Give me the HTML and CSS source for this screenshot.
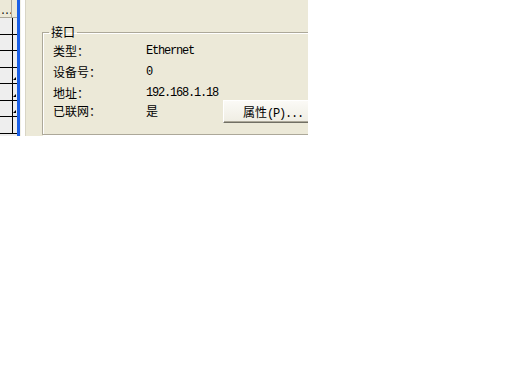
FILE: index.html
```html
<!DOCTYPE html>
<html lang="zh-CN">
<head>
  <meta charset="UTF-8">
  <title>接口属性</title>
  <link rel="stylesheet" href="styles.css">
</head>
<body>
  <div class="window">
    <div class="grid">
      <div class="grid-head">
        <div class="head-btn">...</div>
      </div>
      <div class="grid-row"><div class="cell"></div><div class="cell-s"></div></div>
      <div class="grid-row"><div class="cell"></div><div class="cell-s"></div></div>
      <div class="grid-row"><div class="cell"></div><div class="cell-s"></div></div>
      <div class="grid-row"><div class="cell"></div><div class="cell-s"><span class="mark"></span></div></div>
      <div class="grid-row"><div class="cell"></div><div class="cell-s"><span class="mark"></span></div></div>
      <div class="grid-row"><div class="cell"></div><div class="cell-s"><span class="mark"></span></div></div>
      <div class="grid-row"><div class="cell"></div><div class="cell-s"></div></div>
    </div>
    <div class="splitter"></div>
    <div class="edge"></div>
    <div class="panel">
      <fieldset class="group">
        <legend>接口</legend>
        <div class="rows">
          <div class="label">类型：</div>
          <div class="value latin">Ethernet</div>
          <div></div>
          <div class="label">设备号：</div>
          <div class="value latin">0</div>
          <div></div>
          <div class="label">地址：</div>
          <div class="value latin">192.168.1.18</div>
          <div></div>
          <div class="label">已联网：</div>
          <div class="value">是</div>
          <div><button class="btn">属性<span class="latin">(P)...</span></button></div>
        </div>
      </fieldset>
    </div>
  </div>
</body>
</html>
```

FILE: styles.css
```css
body {
  margin: 0;
  background: #ffffff;
  font-family: "Noto Sans CJK SC", "Liberation Sans", sans-serif;
  font-size: 12px;
  color: #000000;
}
.window {
  display: flex;
  width: 308px;
  height: 136px;
  overflow: hidden;
}
.grid {
  width: 17px;
  display: flex;
  flex-direction: column;
  background: #eeeeee;
}
.grid-head {
  height: 17px;
  flex: none;
  background: #ece9d8;
  border-bottom: 1px solid #aca899;
  display: flex;
}
.head-btn {
  width: 11px;
  border-right: 1px solid #aca899;
  font-family: "Liberation Mono", monospace;
  font-size: 10px;
  line-height: 10px;
  padding-top: 7px;
  overflow: hidden;
  letter-spacing: -2px;
  margin-left: -3px;
  padding-left: 3px;
}
.grid-row {
  height: 15.5px;
  flex: none;
  display: flex;
  border-bottom: 1px solid #000000;
}
.grid-row:first-of-type {
  height: 15px;
}
.cell {
  width: 12px;
  border-right: 1px solid #000000;
}
.cell-s {
  flex: 1;
  display: flex;
  align-items: flex-end;
  padding-bottom: 3px;
}
.mark {
  width: 0;
  height: 0;
  border-left: 3px solid transparent;
  border-bottom: 3px solid #000000;
}
.splitter {
  width: 3px;
  background: #1a5fe6;
}
.edge {
  width: 4px;
  background: #ffffff;
  border-left: 1px solid #f1efe5;
  border-right: 1px solid #d8d5c6;
}
.panel {
  flex: 1;
  background: #ece9d8;
  padding: 26px 0 0 16px;
  overflow: hidden;
}
.group {
  margin: 0;
  width: 300px;
  padding: 0 0 10px 6px;
  border: 1px solid #aca899;
  box-shadow: 1px 1px 0 #ffffff, inset 1px 1px 0 #ffffff;
}
.group legend {
  padding: 0 2px;
  line-height: 12px;
}
.rows {
  display: grid;
  grid-template-columns: 93px 77px auto;
  grid-auto-rows: 21px;
  align-items: center;
  padding: 2px 0 0 4px;
}
.rows > div:nth-last-child(-n+3) {
  height: 21px;
  padding-top: 2px;
}
.label, .value {
  line-height: 14px;
}
.latin {
  font-family: "Liberation Mono", "Noto Sans CJK SC", monospace;
  letter-spacing: -1.2px;
}
.btn {
  display: block;
  width: 90px;
  height: 23px;
  margin-top: -4px;
  padding: 0 0 0 19px;
  text-align: left;
  font-family: "Noto Sans CJK SC", sans-serif;
  font-size: 12px;
  background: linear-gradient(#fbfaf6, #efede3);
  border: 1px solid;
  border-color: #ffffff #716f64 #716f64 #ffffff;
  box-shadow: inset -1px -1px 0 #aca899;
  color: #000000;
}
```
